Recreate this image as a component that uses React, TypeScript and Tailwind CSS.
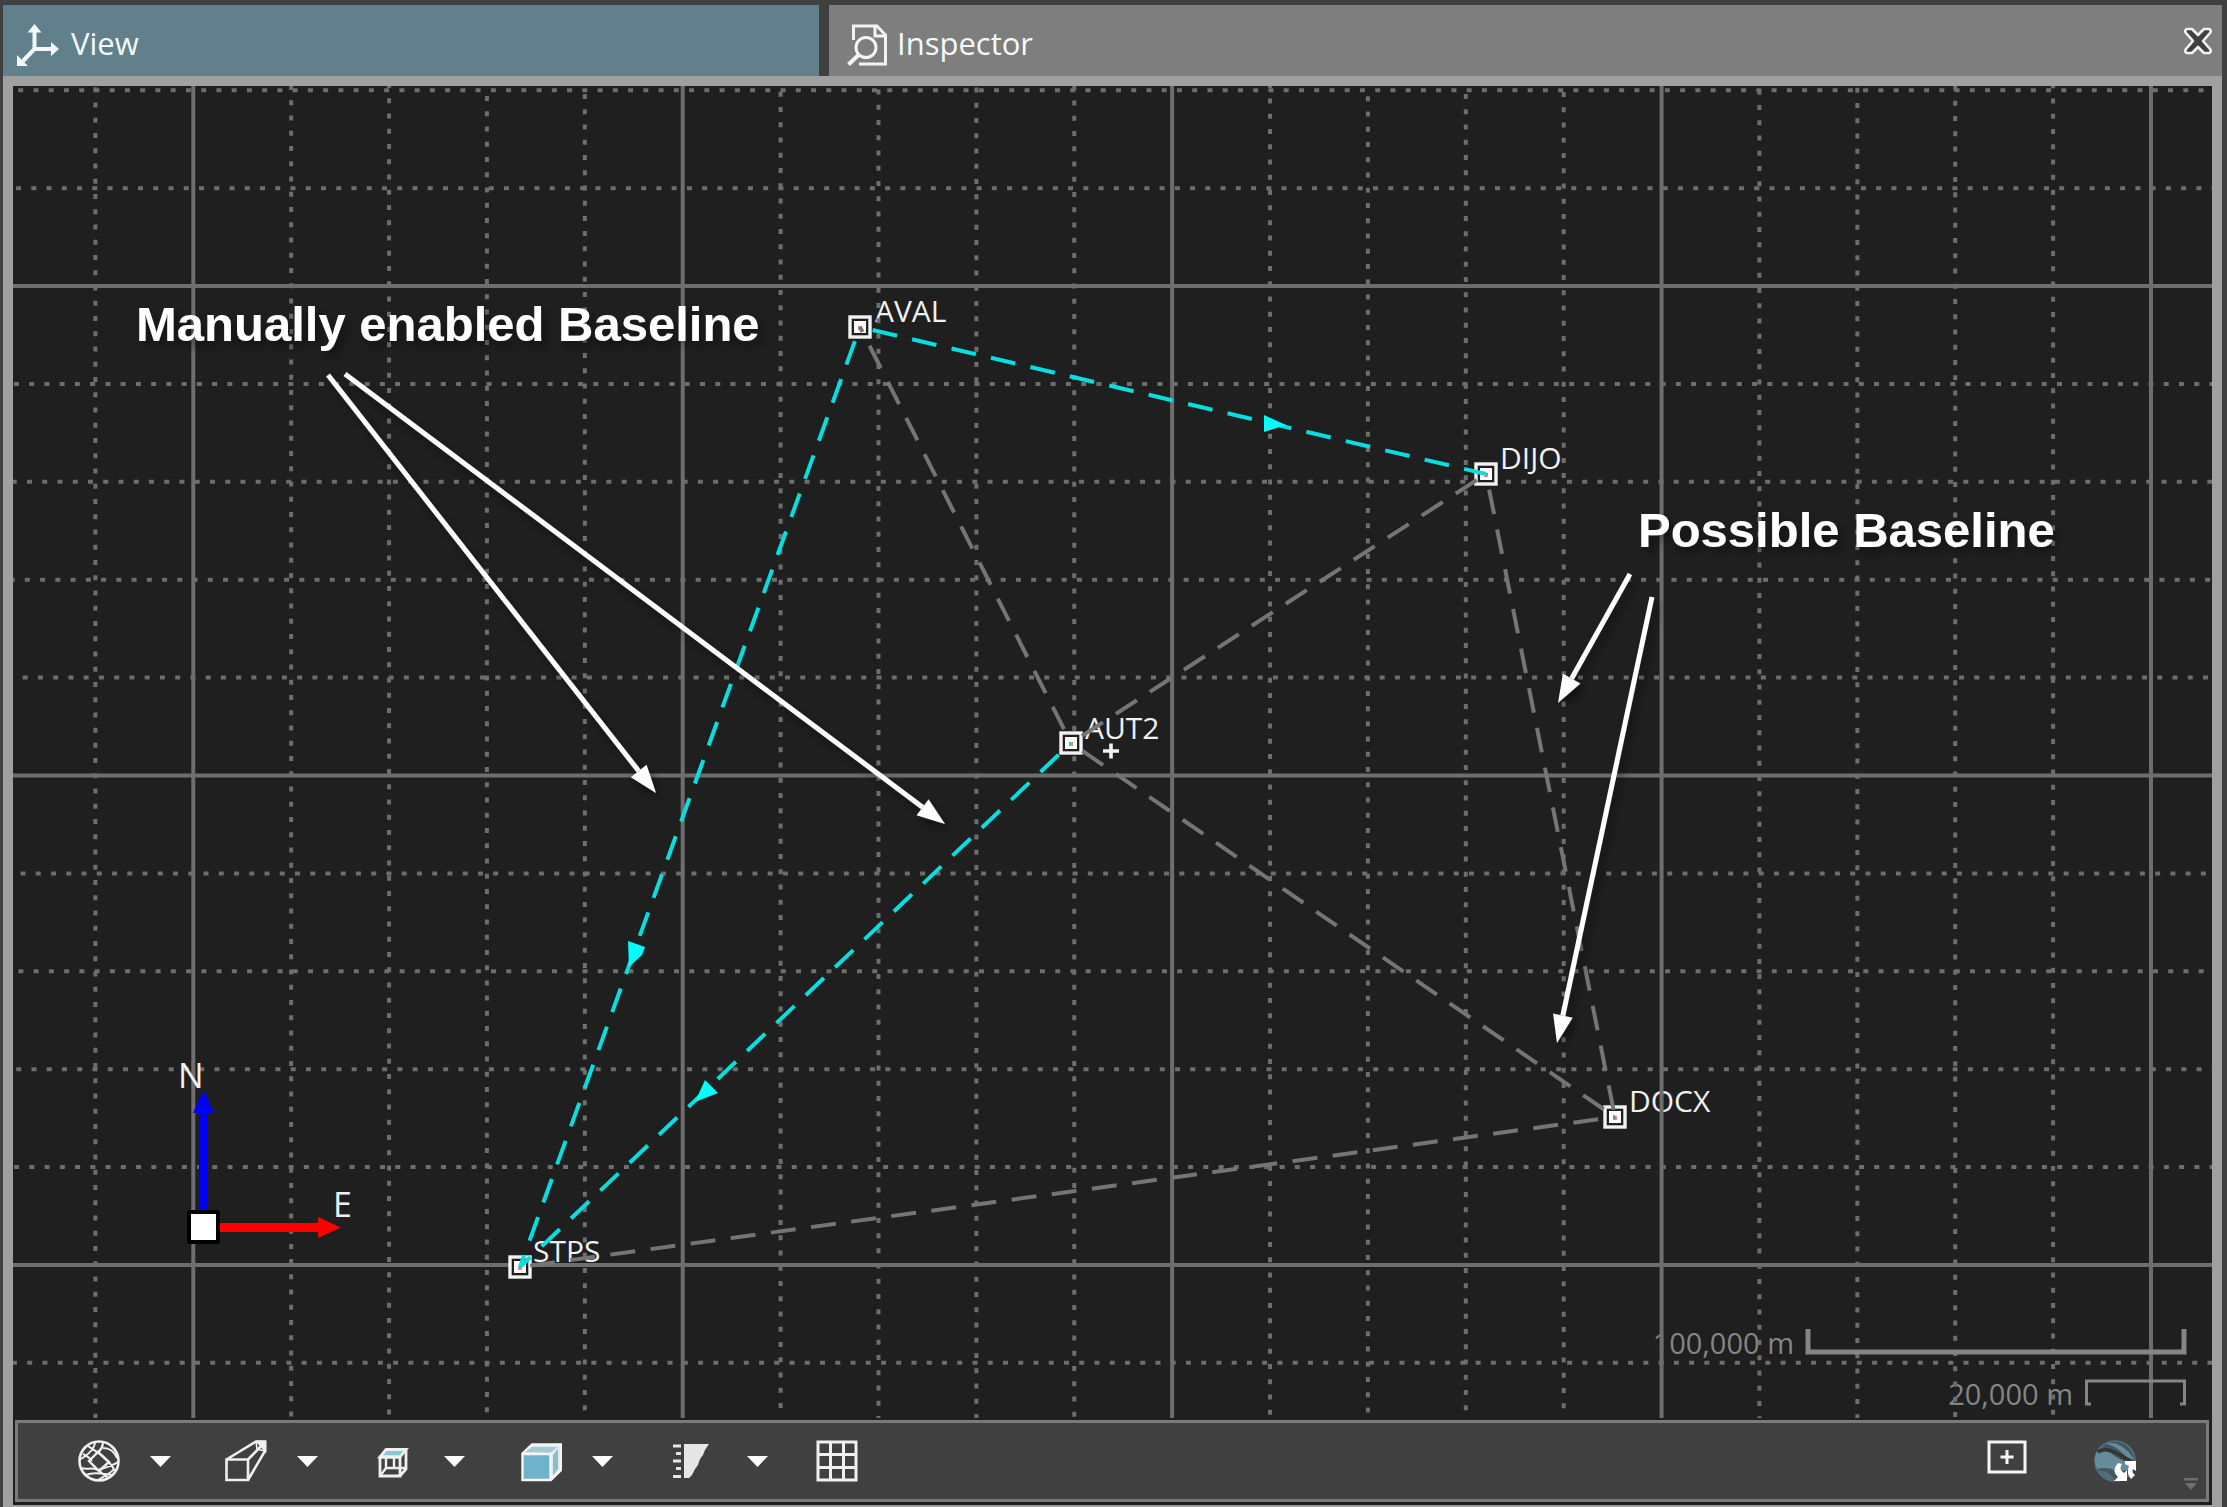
import React from 'react';

const LABEL_FONT = 'font-["Open_Sans","Noto_Sans",sans-serif]';

const PITCH = 97.885;
const DOT = 15.247;
const LEFT = 13;
const TOP = 86;
const RIGHT = 2212;
const BOTTOM = 1418;

type Line = { at: number; major: boolean; offset: number };

// Minor lines carry the dot pattern on from one line to the next.
function gridLines(first: number, firstMajor: number, count: number, dotStart: number, edge: number): Line[] {
  let minor = 0;
  return Array.from({ length: count }, (_, i) => {
    const major = i % 5 === firstMajor;
    const start = dotStart - 2.5 - edge - minor * 2.15;
    if (!major) minor += 1;
    return { at: first + i * PITCH, major, offset: (((-start % DOT) + DOT) % DOT) };
  });
}

const columns = gridLines(95.4, 1, 22, 105, TOP);
const rows = gridLines(90.3, 2, 14, 20.7, LEFT);

type Station = { name: string; x: number; y: number; tx: number; ty: number };

const stations: Record<string, Station> = {
  AVAL: { name: 'AVAL', x: 860, y: 327, tx: 875, ty: 322 },
  DIJO: { name: 'DIJO', x: 1486, y: 474, tx: 1500, ty: 469 },
  AUT2: { name: 'AUT2', x: 1071, y: 743, tx: 1085, ty: 739 },
  DOCX: { name: 'DOCX', x: 1615, y: 1117, tx: 1629, ty: 1112 },
  STPS: { name: 'STPS', x: 520, y: 1267, tx: 533, ty: 1262 },
};

const baselines = [
  { from: 'AVAL', to: 'AUT2', start: 21, enabled: false },
  { from: 'AUT2', to: 'DIJO', start: 13, enabled: false },
  { from: 'AUT2', to: 'DOCX', start: 14, enabled: false },
  { from: 'DIJO', to: 'DOCX', start: 16, enabled: false },
  { from: 'DOCX', to: 'STPS', start: 17, enabled: false },
  { from: 'AVAL', to: 'DIJO', start: 13, enabled: true },
  { from: 'AVAL', to: 'STPS', start: 15, enabled: true },
  { from: 'AUT2', to: 'STPS', start: 17, enabled: true },
];

const callouts = [
  [328, 375, 656, 793],
  [345, 374, 945, 824],
  [1630, 574, 1558, 703],
  [1652, 597, 1557, 1043],
];

function Callout({ p }: { p: number[] }) {
  const [x1, y1, x2, y2] = p;
  const len = Math.hypot(x2 - x1, y2 - y1);
  const ux = (x2 - x1) / len;
  const uy = (y2 - y1) / len;
  const bx = x2 - ux * 28;
  const by = y2 - uy * 28;
  return (
    <g>
      <line x1={x1} y1={y1} x2={bx} y2={by} stroke="#fff" strokeWidth={5} />
      <polygon
        points={`${x2},${y2} ${bx - uy * 10},${by + ux * 10} ${bx + uy * 10},${by - ux * 10}`}
        fill="#fff"
      />
    </g>
  );
}

function NetworkMap() {
  return (
    <svg
      viewBox={`${LEFT} ${TOP} ${RIGHT - LEFT} ${BOTTOM - TOP}`}
      className="block h-auto w-full bg-[#1f1f1f]"
      role="img"
      aria-label="Baseline network"
    >
      <defs>
        <filter id="shade" x="-10%" y="-10%" width="120%" height="130%">
          <feDropShadow dx="4" dy="6" stdDeviation="5" floodColor="#000" floodOpacity="0.45" />
        </filter>
      </defs>

      <g className={`${LABEL_FONT} text-[30px]`} fill="#f0f0f0">
        {Object.values(stations).map((s) => (
          <text key={s.name} x={s.tx} y={s.ty}>
            {s.name}
          </text>
        ))}
      </g>
      <g className={`${LABEL_FONT} text-[29px]`} fill="#858585">
        <text x={1794} y={1354} textAnchor="end">100,000 m</text>
        <text x={2073} y={1405} textAnchor="end">20,000 m</text>
      </g>

      <g stroke="#6e6e6e">
        {rows.map((l) => (
          <line
            key={l.at}
            x1={LEFT}
            x2={RIGHT}
            y1={l.at}
            y2={l.at}
            strokeWidth={4}
            strokeDasharray={l.major ? undefined : `5 ${DOT - 5}`}
            strokeDashoffset={l.offset}
          />
        ))}
        {columns.map((l) => (
          <line
            key={l.at}
            y1={TOP}
            y2={BOTTOM}
            x1={l.at}
            x2={l.at}
            strokeWidth={4}
            strokeDasharray={l.major ? undefined : `5 ${DOT - 5}`}
            strokeDashoffset={l.offset}
          />
        ))}
      </g>

      <g fill="none" stroke="#858585">
        <path d="M1808 1329V1352H2184V1329" strokeWidth={5} />
        <path d="M2091 1404H2086.500V1381H2184.500V1404H2180" strokeWidth={3} />
      </g>

      {Object.values(stations).map((s) => (
        <g key={s.name}>
          <rect x={s.x - 10} y={s.y - 10} width={20} height={20} fill="#1f1f1f" stroke="#f2f2f2" strokeWidth={3.4} />
          <rect x={s.x - 6} y={s.y - 6} width={12} height={12} fill="#fff" />
          <rect x={s.x - 2} y={s.y - 1} width={4} height={4} fill="#d98a8a" />
        </g>
      ))}

      {baselines.map((b) => {
        const a = stations[b.from];
        const z = stations[b.to];
        return (
          <line
            key={b.from + b.to}
            x1={a.x}
            y1={a.y}
            x2={z.x}
            y2={z.y}
            stroke={b.enabled ? '#08dede' : '#757575'}
            strokeWidth={4}
            strokeDasharray="25 15.500"
            strokeDashoffset={40.5 - b.start}
          />
        );
      })}
      <g fill="#00ffff">
        <polygon points="1264,415 1286,425 1264,432" />
        <polygon points="628,941 645,947 642,955 629,967" />
        <polygon points="705,1080 718,1093 695,1102" />
      </g>

      <path d="M1103 751h16M1111 743.500v15" stroke="#f2f2f2" strokeWidth={3.6} />

      <path d="M203.500 1216V1110" stroke="#0000ff" strokeWidth={9} />
      <polygon points="203.500,1090 214,1113 193,1113" fill="#0000ff" />
      <path d="M216 1227.500H320" stroke="#f00" strokeWidth={9} />
      <polygon points="341,1227.500 318,1217 318,1238" fill="#f00" />
      <rect x={187} y={1210} width={33} height={34} rx={3} fill="#000" />
      <rect x={191} y={1214} width={25} height={26} fill="#fff" />
      <g className={`${LABEL_FONT} text-[34px]`} fill="#f0f0f0">
        <text x={178} y={1088}>N</text>
        <text x={333} y={1217}>E</text>
      </g>

      <g filter="url(#shade)">
        {callouts.map((p) => (
          <Callout key={p.join()} p={p} />
        ))}
        <g className='font-["Liberation_Sans",Arial,sans-serif] text-[49px] font-bold' fill="#fff">
          <text x={136} y={341}>Manually enabled Baseline</text>
          <text x={1638} y={547}>Possible Baseline</text>
        </g>
      </g>
    </svg>
  );
}

function AxesIcon() {
  return (
    <svg viewBox="0 0 42 42" className="size-[42px]" fill="none" stroke="#f4fafc" strokeWidth={4}>
      <path d="M17.500 7V25L6 37M17.500 25H35" />
      <path d="M17.500 0L24.500 8.500H10.500ZM42 25L34 18V32ZM0 42V31L11 42Z" fill="#f4fafc" stroke="none" />
    </svg>
  );
}

function InspectIcon() {
  return (
    <svg viewBox="0 0 42 42" className="size-[42px]" fill="none" stroke="#f4f4f4" strokeWidth={3}>
      <path d="M6.500 16V2H30L38.500 11V40H12" />
      <path d="M28 3V12H37" />
      <circle cx={19} cy={23.500} r={10} />
      <path d="M11.500 31L1.500 40.500" strokeWidth={4} />
    </svg>
  );
}

function CloseIcon() {
  return (
    <svg viewBox="0 0 30 28" className="h-7 w-[30px]">
      <path
        d="M4 2H9L15 8L21 2H26Q29 3 27 6L20 14L27 22Q29 25 26 26H21L15 20L9 26H4Q1 25 3 22L10 14L3 6Q1 3 4 2Z"
        fill="#404040"
        stroke="#f2f2f2"
        strokeWidth={2.600}
        strokeLinejoin="round"
      />
    </svg>
  );
}

function SphereIcon() {
  return (
    <svg viewBox="0 0 42 42" className="size-[42px]" fill="none" stroke="#f0f0f0" strokeWidth={2}>
      <circle cx={21} cy={21} r={19.500} strokeWidth={2.600} />
      <path d="M17 2C17 7 12 14 3 19M25 2C25 8 22 10 19 13M10 6C16 10 31 18 37 31M5 14C9 16 12 18 14 21M20 30C24 33 28 36 30 38M25 8C33 8 37 13 39 18M3 28C9 30 14 27 20 30C26 28 32 27 40 22M19 13C23 10 25 8 25 2M8 35C16 31 26 34 34 35M36 29C32 34 24 37 20 40" />
      <path d="M11 21L20 12L31 22L21 31Z" strokeWidth={2.400} />
    </svg>
  );
}

function FrustumIcon() {
  return (
    <svg viewBox="0 0 42 42" className="size-[42px]" fill="none" stroke="#f0f0f0" strokeWidth={2.6}>
      <path d="M1.500 19.500H23V40H1.500ZM1.500 19.500L31 1.500H40V11L23 40M23 19.500L40 2" />
      <path d="M31 1.500L32 9L40 11" strokeWidth={1.600} />
      <path d="M33 2H40V10Z" fill="#f0f0f0" />
    </svg>
  );
}

function WireCubeIcon() {
  return (
    <svg viewBox="0 0 42 42" className="size-[42px]" fill="none" stroke="#f0f0f0" strokeWidth={2.8}>
      <path d="M8 17L14 9.500H34L28 17Z" fill="#8fc4d8" />
      <path d="M8 17V36H28V17ZM34 10V29L28 36" />
      <path d="M14 17V28H34M14 28L8 36M22 17V28" strokeWidth={2.400} />
    </svg>
  );
}

function SolidCubeIcon() {
  return (
    <svg viewBox="0 0 42 42" className="size-[42px]" stroke="#f5f5f5" strokeWidth={2.4}>
      <path d="M2 14L12 4.500H41V30L31 40" fill="#dfeaee" />
      <path d="M5 12L12 7H37L30 13Z" fill="#a3c9d6" stroke="none" />
      <path d="M33 15L38 9V29L33 35Z" fill="#8fbccb" stroke="none" />
      <path d="M2.500 14H30.500V40H2.500Z" fill="#6fb2cb" />
    </svg>
  );
}

function ExaggerationIcon() {
  return (
    <svg viewBox="0 0 42 42" className="size-[42px]" fill="#e6e6e6">
      <path d="M14 4H39L35 10L33 15L30 19L28 25L25 29L22 35L19 38H14Z" />
      <path d="M3 6H11M6 13.500H11M3 21H11M6 28.500H11M3 36.500H11" stroke="#e6e6e6" strokeWidth={3} />
    </svg>
  );
}

function GridIcon() {
  return (
    <svg viewBox="0 0 42 42" className="size-[42px]" fill="none" stroke="#f0f0f0" strokeWidth={3}>
      <path d="M2 2H40V40H2ZM14.500 2V40M27.500 2V40M2 14.500H40M2 27.500H40" />
    </svg>
  );
}

function CenterIcon() {
  return (
    <svg viewBox="0 0 40 34" className="h-[34px] w-10" fill="none" stroke="#f5f5f5" strokeWidth={3}>
      <path d="M2 2H38V32H2ZM20 10V24M13.500 17H26.500" />
    </svg>
  );
}

function GlobeIcon() {
  return (
    <svg viewBox="0 0 42 42" className="size-[42px]">
      <circle cx={21} cy={21} r={20} fill="#44565d" stroke="#56727e" strokeWidth={1.5} />
      <path d="M2 14C5 9 12 10 18 14C25 19 30 22 37 23L36 30L22 31C17 28 9 27 4 29C0 24 0 19 2 14Z" fill="#668c9b" />
      <path d="M12 4C22 0 33 8 40 19L34 20C30 13 22 6 12 4Z" fill="#668c9b" />
      <path d="M5 31C11 30 17 34 21 40C14 40 8 37 5 31Z" fill="#4d6e7b" />
      <path d="M4 12C14 5 26 16 37 21" fill="none" stroke="#343434" strokeWidth={3.500} />
      <path d="M31 21H42V31L39 29Q37 32 41 35L37 39Q32 34 35 26L31 24Z" fill="#fff" />
      <path d="M24 23L28 24Q24 29 30 33L33 30V41H20L24 37Q17 31 24 23Z" fill="#fff" />
    </svg>
  );
}

const tools = [
  { label: 'Orbit', Icon: SphereIcon, gap: 'gap-[30px]', menu: true },
  { label: 'Projection', Icon: FrustumIcon, gap: 'gap-[30px]', menu: true },
  { label: 'Standard views', Icon: WireCubeIcon, gap: 'gap-[30px]', menu: true },
  { label: 'Shading', Icon: SolidCubeIcon, gap: 'gap-[30px]', menu: true },
  { label: 'Vertical exaggeration', Icon: ExaggerationIcon, gap: 'gap-[35px]', menu: true },
  { label: 'Grid', Icon: GridIcon, gap: 'gap-[30px]', menu: false },
];

function Toolbar() {
  return (
    <div
      role="toolbar"
      aria-label="View tools"
      className="mt-[2px] mr-[3px] ml-[2px] flex h-[82px] items-center justify-between border-3 border-[#7a7a7a] bg-[#404040] pl-[60px]"
    >
      <div className="grid grid-cols-[147px_147px_148px_150px_146px_42px]">
        {tools.map(({ label, Icon, gap, menu }) => (
          <div key={label} className={`flex items-center ${gap}`}>
            <button type="button" aria-label={label}>
              <Icon />
            </button>
            {menu && (
              <button type="button" aria-label={`${label} options`}>
                <svg viewBox="0 0 21 11" className="h-[11px] w-[21px]" fill="#fff">
                  <path d="M0 0H21L10.500 11Z" />
                </svg>
              </button>
            )}
          </div>
        ))}
      </div>
      <div className="flex h-full items-center pr-2">
        <button type="button" aria-label="Zoom to center" className="mr-[67px] pb-2">
          <CenterIcon />
        </button>
        <button type="button" aria-label="Earth view" className="mr-[48px]">
          <GlobeIcon />
        </button>
        <button type="button" aria-label="More tools" className="self-end pb-[9px]">
          <svg viewBox="0 0 14 12" className="h-3 w-[14px]" fill="#6e6e6e">
            <path d="M0 0H14V2.500H0ZM1 5H13L7 12Z" />
          </svg>
        </button>
      </div>
    </div>
  );
}

export default function App() {
  return (
    <main className="min-h-screen bg-[#404040] pt-[5px] pr-[5px] pl-[3px]">
      <header
        role="tablist"
        className='grid h-[71px] grid-cols-[816fr_1393fr] gap-[10px] font-["Open_Sans","Noto_Sans",sans-serif] text-[31px] leading-10 text-[#f4fafc]'
      >
        <button
          type="button"
          role="tab"
          aria-selected="true"
          className="flex items-center gap-3 bg-[#61808b] pt-3 pb-1 pl-[14px]"
        >
          <AxesIcon />
          <span className="pb-1">View</span>
        </button>
        <div className="flex items-center justify-between bg-[#7e7e7e] pr-[9px]">
          <button type="button" role="tab" aria-selected="false" className="flex items-center gap-2 pt-3 pb-1 pl-[18px]">
            <InspectIcon />
            <span className="pb-1">Inspector</span>
          </button>
          <button type="button" aria-label="Close">
            <CloseIcon />
          </button>
        </div>
      </header>
      <section className="bg-[#a0a0a0] px-[10px] pt-[10px] pb-[2px]">
        <div className="bg-[#1f1f1f] pb-[3px]">
          <NetworkMap />
          <Toolbar />
        </div>
      </section>
    </main>
  );
}
